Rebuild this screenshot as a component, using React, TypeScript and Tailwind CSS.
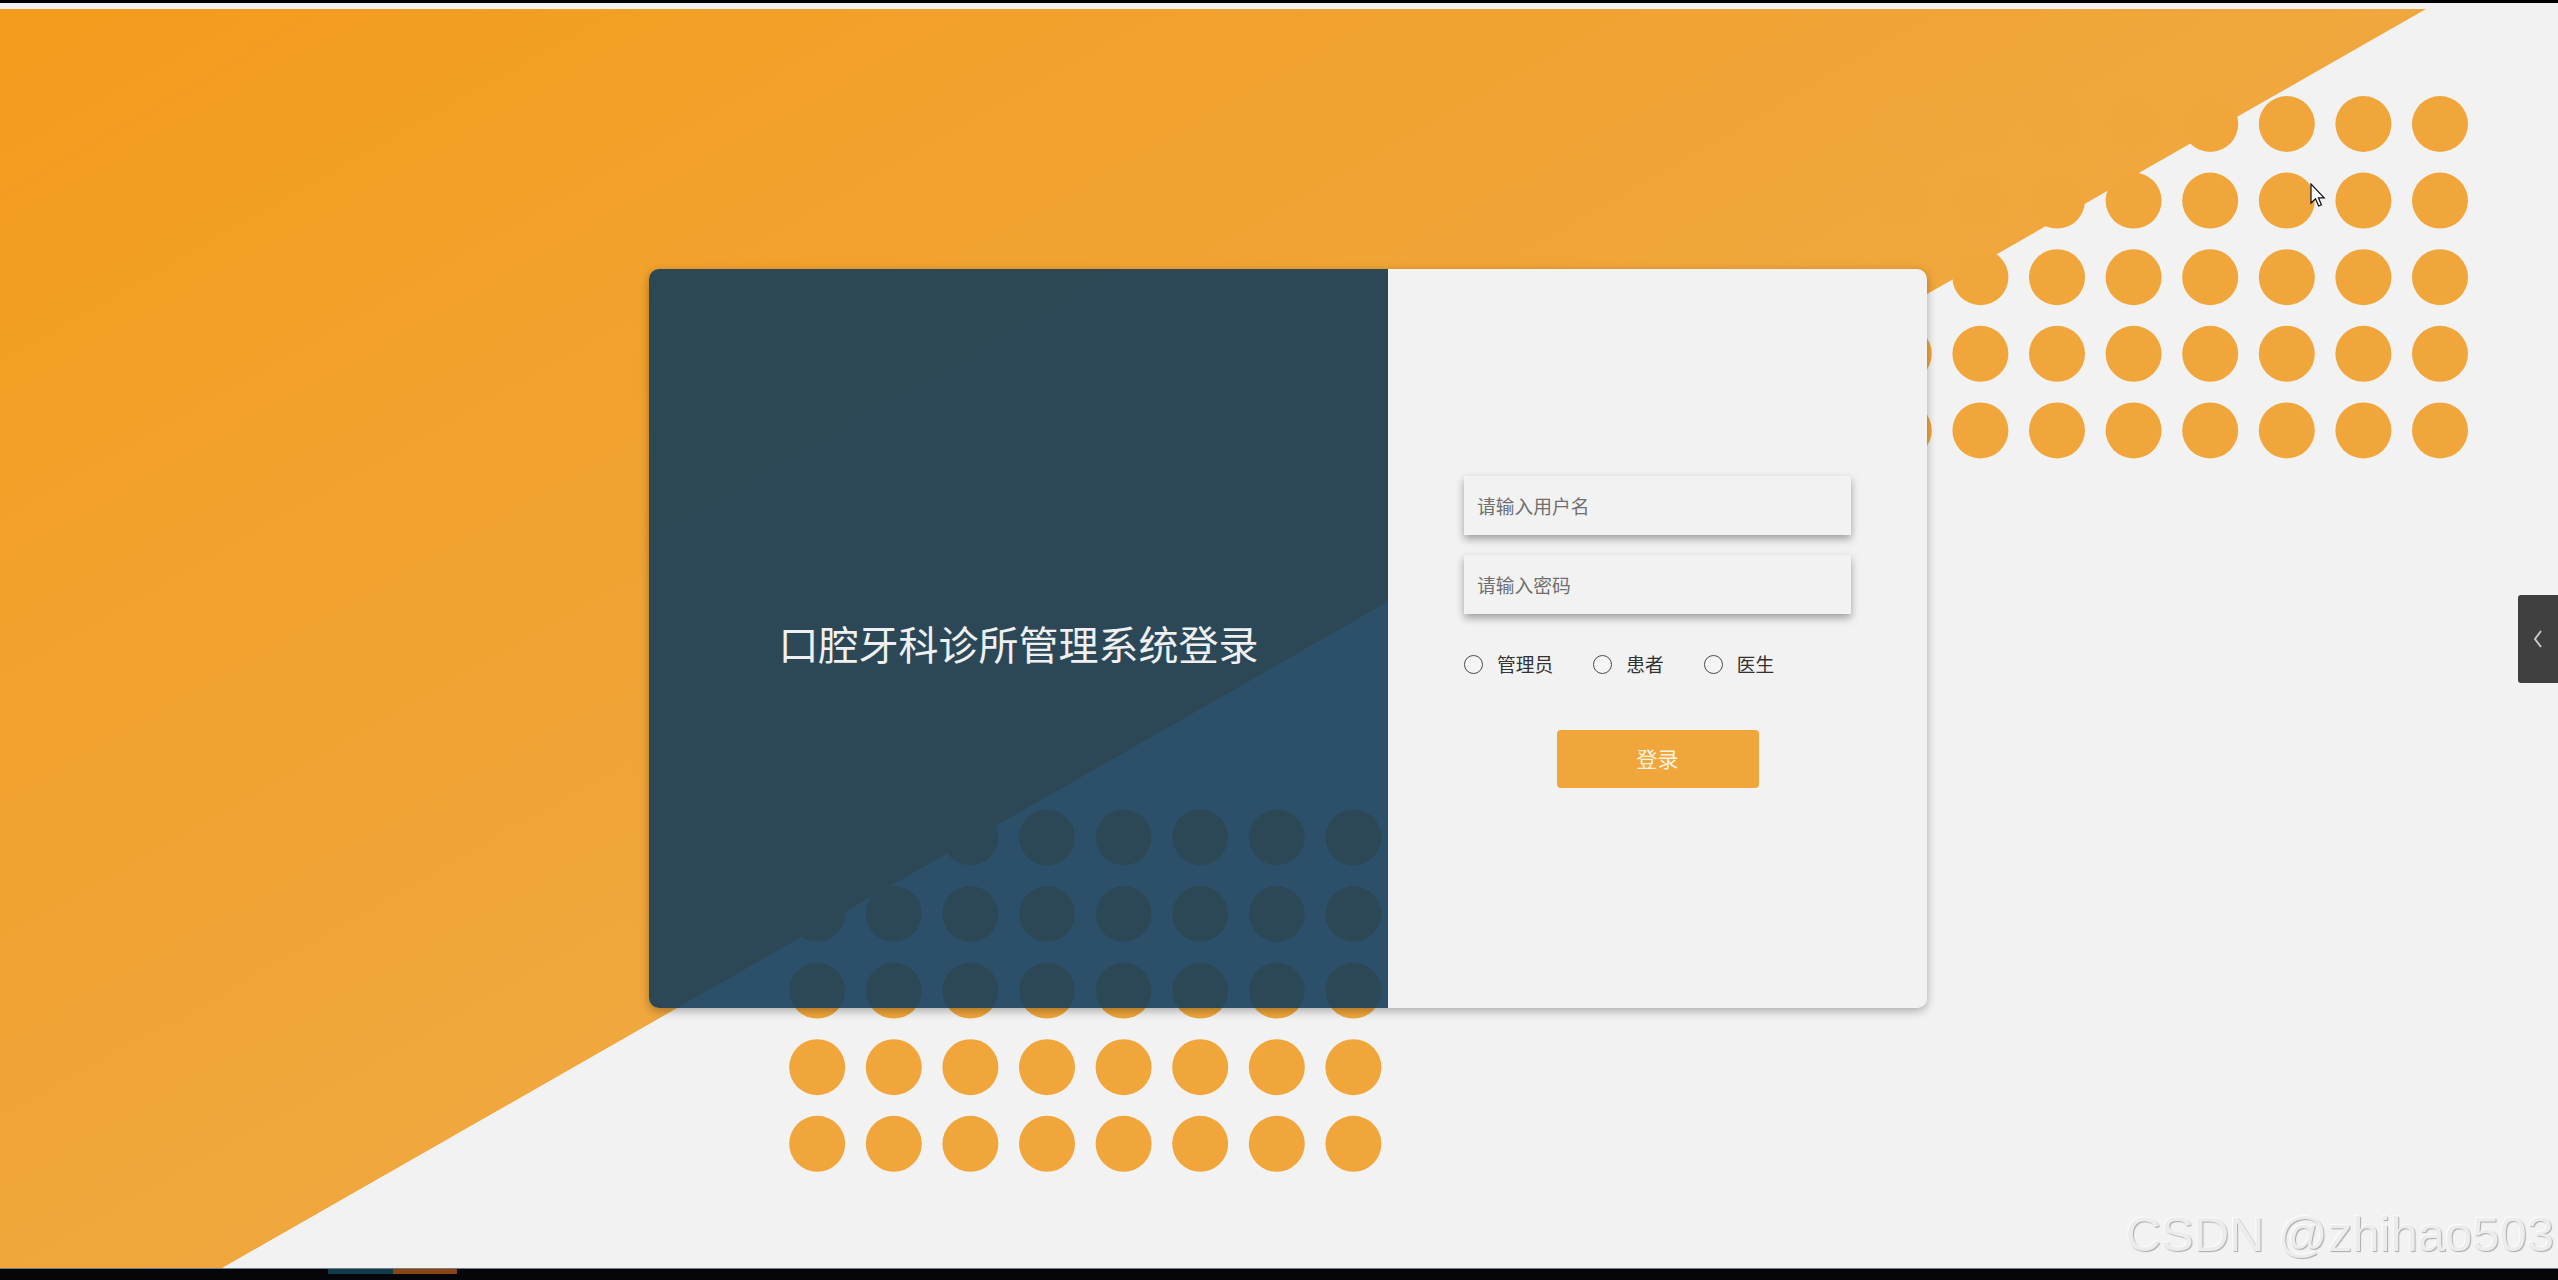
import { useState } from "react";

const cols = [0, 1, 2, 3, 4, 5, 6, 7];
const rows = [0, 1, 2, 3, 4];
const STEP = 76.6;

function Backdrop() {
  // page art: orange wedge from the top-left and two dot grids
  return (
    <svg className="absolute inset-0" width="2558" height="1265" viewBox="0 0 2558 1265">
      <defs>
        <linearGradient id="wedge" gradientUnits="userSpaceOnUse" x1="0" y1="0" x2="597" y2="1048">
          <stop offset="0" stopColor="#f39c1d" />
          <stop offset="1" stopColor="#f0a73d" />
        </linearGradient>
      </defs>
      <polygon points="0,6 2426,6 222,1265 0,1265" fill="url(#wedge)" />
      {rows.map((r) =>
        cols.map((c) => (
          <circle key={`t${r}${c}`} cx={1903.8 + c * STEP} cy={121 + r * STEP} r="28" fill="#f0a63a" />
        ))
      )}
      {rows.map((r) =>
        cols.map((c) => (
          <circle key={`b${r}${c}`} cx={817.2 + c * STEP} cy={834.4 + r * STEP} r="28" fill="#f0a63a" />
        ))
      )}
    </svg>
  );
}

function Radio({ label, name, checked, onPick }: { label: string; name: string; checked: boolean; onPick: () => void }) {
  return (
    <label className="flex items-center gap-[14px] cursor-pointer">
      <input
        type="radio"
        name={name}
        checked={checked}
        onChange={onPick}
        className="appearance-none w-[19px] h-[19px] rounded-full border-[1.5px] border-[#4a4a4a] bg-[#f5f5f5] checked:border-[5px] checked:border-[#f0a63a]"
      />
      <span className="text-[18.75px] leading-none text-[#333]">{label}</span>
    </label>
  );
}

export default function App() {
  const [role, setRole] = useState("");

  return (
    <div className="w-[2558px] h-[1280px] flex flex-col bg-black overflow-hidden font-['Noto_Sans_CJK_SC',sans-serif]">
      <div className="h-[3px]" />

      <main className="relative flex-1 bg-[#f2f2f2] overflow-hidden pl-[649px] pt-[266px]">
        <Backdrop />

        <div className="relative flex w-[1278px] h-[739px] rounded-[10px] shadow-[0_3px_10px_rgba(0,0,0,0.3)]">
          <div className="w-[739px] h-full rounded-l-[10px] bg-[rgba(22,62,90,0.9)] flex items-center justify-center pt-[8px]">
            <h1 className="text-[40px] leading-none text-[#eef0f2] font-normal">口腔牙科诊所管理系统登录</h1>
          </div>

          <div className="flex-1 h-full rounded-r-[10px] bg-[#f2f2f2] flex flex-col items-center pt-[207px]">
            <input
              placeholder="请输入用户名"
              className="w-[387px] h-[59px] px-[13px] bg-[#f2f2f2] text-[18.75px] text-[#333] placeholder:text-[#6f6f6f] outline-none shadow-[0_4px_8px_rgba(0,0,0,0.35)]"
            />
            <input
              type="password"
              placeholder="请输入密码"
              className="mt-[20px] w-[387px] h-[59px] px-[13px] bg-[#f2f2f2] text-[18.75px] text-[#333] placeholder:text-[#6f6f6f] outline-none shadow-[0_4px_8px_rgba(0,0,0,0.35)]"
            />

            <div className="mt-[38px] w-[387px] h-[24px] flex items-center gap-[40px]">
              <Radio label="管理员" name="role" checked={role === "admin"} onPick={() => setRole("admin")} />
              <Radio label="患者" name="role" checked={role === "patient"} onPick={() => setRole("patient")} />
              <Radio label="医生" name="role" checked={role === "doctor"} onPick={() => setRole("doctor")} />
            </div>

            <button className="mt-[54px] w-[202px] h-[58px] rounded-[4px] bg-[#f0a63a] text-[21px] text-[#fdf3e3] hover:opacity-90">
              登录
            </button>
          </div>
        </div>

        <div className="absolute right-0 top-[592px] w-[40px] h-[88px] rounded-l-[3px] bg-[#404040] flex items-center justify-center">
          <svg width="12" height="20" viewBox="0 0 12 20">
            <polyline points="9,2 3,10 9,18" fill="none" stroke="#c8c8c8" strokeWidth="2" />
          </svg>
        </div>

        <svg className="absolute left-[2310px] top-[180px]" width="18" height="26" viewBox="0 0 18 26">
          <path d="M1 1 L1 20 L5.5 15.8 L8.6 23 L11.4 21.8 L8.4 14.8 L14.2 14.8 Z" fill="#fff" stroke="#111" strokeWidth="1.2" />
        </svg>

        <span className="absolute right-[4px] bottom-[9px] text-[49px] leading-none text-[#ececec] font-['Liberation_Sans',sans-serif] [text-shadow:1px_1px_1px_rgba(0,0,0,0.3),-1px_-1px_0_rgba(255,255,255,0.7)]">
          CSDN @zhihao503
        </span>
      </main>

      <footer className="h-[12px] border-t border-[#6e7d89] bg-[#05050a] flex pl-[328px]">
        <div className="w-[65px] h-[5px] bg-[#0f3b4b]" />
        <div className="w-[64px] h-[5px] bg-[#8a4510]" />
      </footer>
    </div>
  );
}
